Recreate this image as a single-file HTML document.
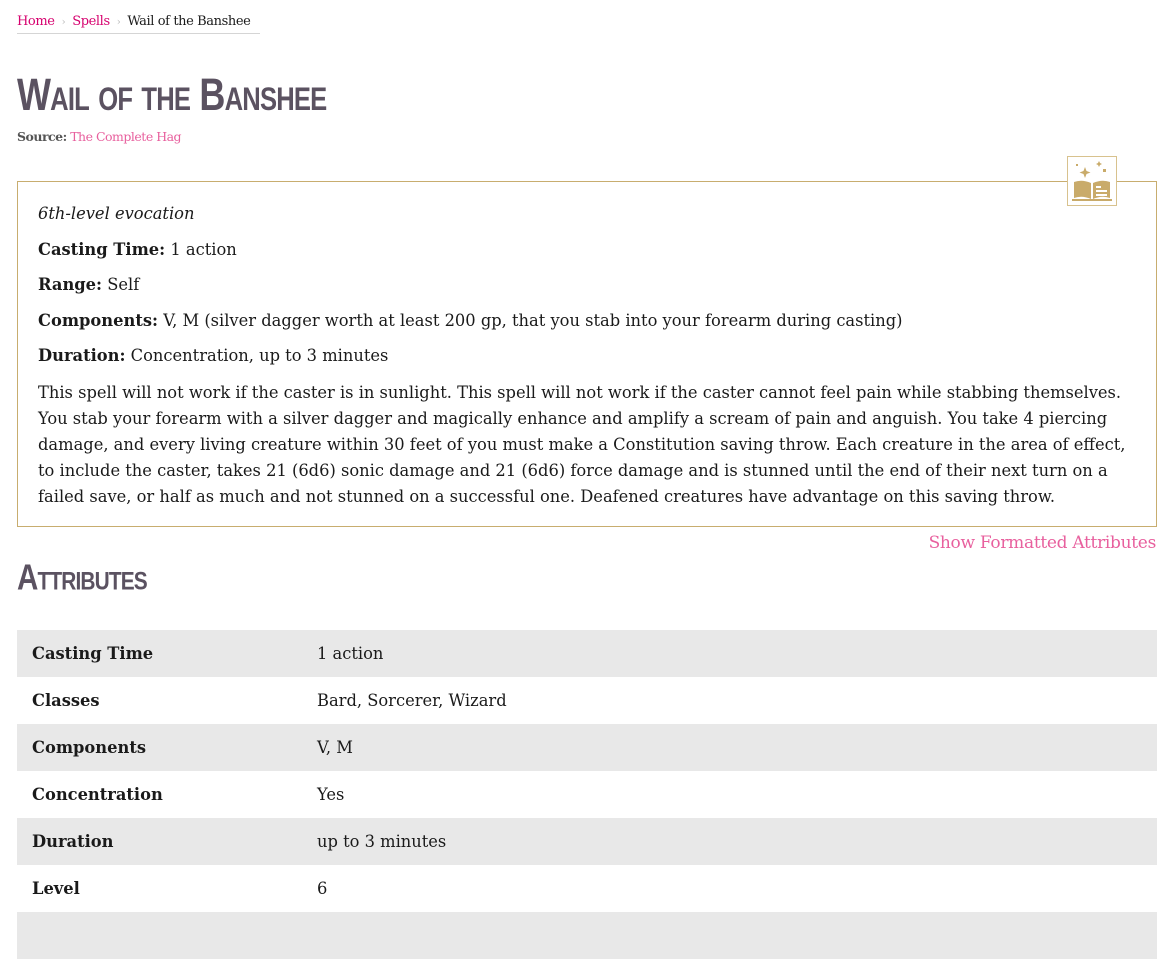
<!DOCTYPE html>
<html><head><meta charset="utf-8"><style>
body{margin:0;background:#fff;font-family:"DejaVu Serif",serif;color:#1a1a1a;width:1166px;height:918px;overflow:hidden;position:relative}
a{color:#d6006e;text-decoration:none}
.bc{position:absolute;left:17px;top:14px;font-size:13px;padding-bottom:4px;border-bottom:1px solid #d5d5d5;width:243px;white-space:nowrap;letter-spacing:-0.4px}
.bc .sep{color:#bbb;margin:0 7px;font-size:10px}
h1{position:absolute;left:17px;top:69px;margin:0;font-family:"Liberation Sans",sans-serif;font-weight:bold;font-variant:small-caps;font-size:45px;color:#5b5261;letter-spacing:-1px;transform:scale(0.8,1.0);transform-origin:left top;white-space:nowrap}
.src{position:absolute;left:17px;top:129px;font-size:12.5px;color:#555;letter-spacing:-0.5px}
.src a{color:#e8609e}
.box{position:absolute;left:17px;top:181px;width:1108px;height:314px;border:1px solid #c8ad6f;padding:20px 10px 10px 20px;font-size:16.3px}
.box p{margin:0 0 11.5px;line-height:24px}
.box p.d{line-height:26px;margin-top:1px}
.icon{position:absolute;left:1067px;top:156px;width:48px;height:48px;border:1px solid #d8c28e;background:#fff}
.show{position:absolute;right:10px;top:533px;color:#e8609e;font-size:17px;font-family:"DejaVu Serif",serif;letter-spacing:-0.3px}
h2{position:absolute;left:17px;top:558px;margin:0;font-family:"Liberation Sans",sans-serif;font-weight:bold;font-variant:small-caps;font-size:34px;color:#5b5261;letter-spacing:-1px;transform:scale(0.87,1.05);transform-origin:left top}
table{position:absolute;left:17px;top:630px;width:1140px;border-collapse:collapse;font-size:16.3px}
td{height:47px;padding:0 0 0 15px}
td:first-child{font-weight:bold;width:270px}
tr:nth-child(odd){background:#e8e8e8}
</style></head><body>
<div class="bc"><a>Home</a><span class="sep">›</span><a>Spells</a><span class="sep">›</span>Wail of the Banshee</div>
<h1>Wail of the Banshee</h1>
<div class="src"><b>Source:</b> <a>The Complete Hag</a></div>
<div class="box">
<p><i>6th-level evocation</i></p>
<p><b>Casting Time:</b> 1 action</p>
<p><b>Range:</b> Self</p>
<p><b>Components:</b> V, M (silver dagger worth at least 200 gp, that you stab into your forearm during casting)</p>
<p><b>Duration:</b> Concentration, up to 3 minutes</p>
<p class="d">This spell will not work if the caster is in sunlight. This spell will not work if the caster cannot feel pain while stabbing themselves. You stab your forearm with a silver dagger and magically enhance and amplify a scream of pain and anguish. You take 4 piercing damage, and every living creature within 30 feet of you must make a Constitution saving throw. Each creature in the area of effect, to include the caster, takes 21 (6d6) sonic damage and 21 (6d6) force damage and is stunned until the end of their next turn on a failed save, or half as much and not stunned on a successful one. Deafened creatures have advantage on this saving throw.</p>
</div>
<div class="icon"><svg width="48" height="48" viewBox="0 0 48 48"><g fill="#c9ab6a"><path d="M17 10l1.5 4 4 1.5-4 1.5-1.5 4-1.5-4-4-1.5 4-1.5z"/><rect x="8" y="7" width="2" height="2"/><path d="M31 4l1 2 2 1-2 1-1 2-1-2-2-1 2-1z"/><rect x="35" y="12" width="3" height="3"/><path d="M6 25q8-3 17 1v16q-9-4-17-1z"/><path d="M25 26q9-4 17-1v16q-8-3-17 1z"/><rect x="4" y="42" width="40" height="2"/></g><g fill="#fff"><rect x="28" y="29" width="5" height="2"/><rect x="28" y="33" width="11" height="2"/><rect x="28" y="37" width="11" height="2"/></g></svg></div>
<div class="show">Show Formatted Attributes</div>
<h2>Attributes</h2>
<table>
<tr><td>Casting Time</td><td>1 action</td></tr>
<tr><td>Classes</td><td>Bard, Sorcerer, Wizard</td></tr>
<tr><td>Components</td><td>V, M</td></tr>
<tr><td>Concentration</td><td>Yes</td></tr>
<tr><td>Duration</td><td>up to 3 minutes</td></tr>
<tr><td>Level</td><td>6</td></tr>
<tr><td>&nbsp;</td><td></td></tr>
</table>
</body></html>
